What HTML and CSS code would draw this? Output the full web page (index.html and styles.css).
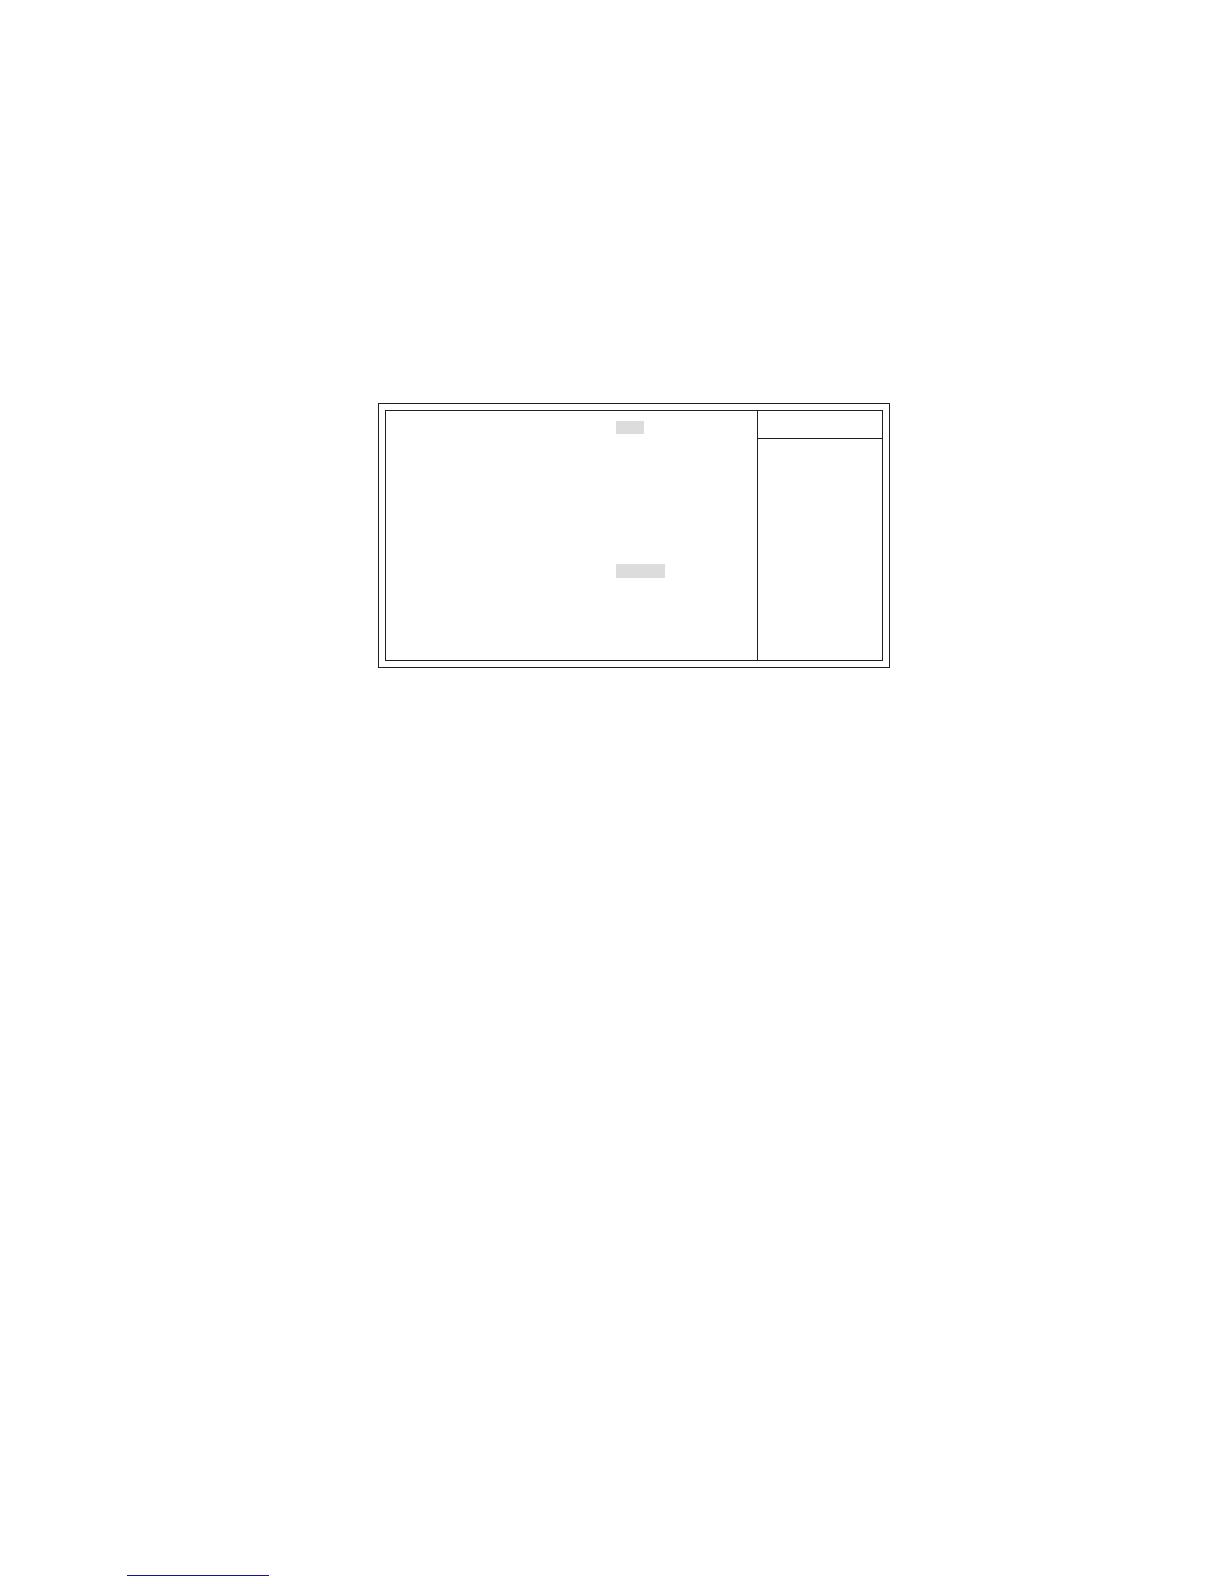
FILE: index.html
```html
<!DOCTYPE html>
<html lang="en">
<head>
    <meta charset="UTF-8">
    <meta name="viewport" content="width=device-width, initial-scale=1.0">
    <title>Setup</title>
    <link rel="stylesheet" href="styles.css">
</head>
<body>
    <main class="content">
        <div class="frame">
            <div class="screen">
                <div class="settings">
                    <div class="highlight short"></div>
                    <div class="highlight long"></div>
                </div>
                <div class="help">
                    <div class="help-header"></div>
                </div>
            </div>
        </div>
    </main>

    <footer class="footer">
        <div class="footer-line"></div>
    </footer>
</body>
</html>
```

FILE: styles.css
```css
* {
    margin: 0;
    padding: 0;
    box-sizing: border-box;
}
body {
    background: white;
    display: flex;
    flex-direction: column;
    min-height: 100vh;
}
.content {
    flex: 1;
    padding: 403px 334px 0 378px;
}
.frame {
    border: 1px solid #231f20;
    padding: 6px;
}
.screen {
    display: flex;
    border: 1px solid #231f20;
}
.settings {
    flex: 1;
    display: flex;
    flex-direction: column;
    gap: 130px;
    padding: 10px 0 82px 230px;
}
.highlight {
    background: #dcdcdd;
}
.short {
    width: 28px;
    height: 13px;
}
.long {
    width: 49px;
    height: 14px;
}
.help {
    width: 125px;
    border-left: 1px solid #231f20;
}
.help-header {
    height: 28px;
    border-bottom: 1px solid #231f20;
}
.footer {
    padding: 0 127px 8px;
}
.footer-line {
    width: 142px;
    height: 1px;
    background: #14148c;
}
```
